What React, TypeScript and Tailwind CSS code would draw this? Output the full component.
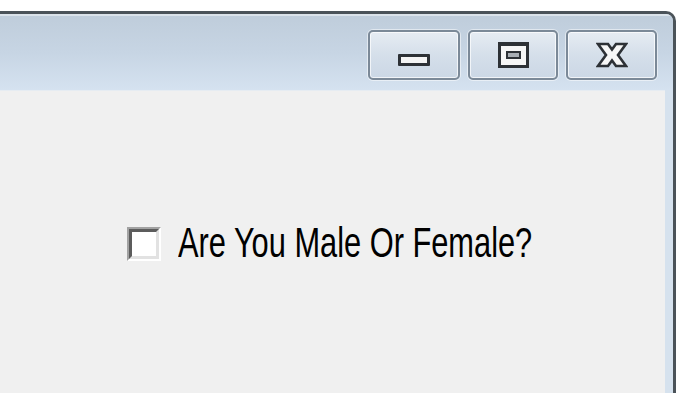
import React from "react";

function TitleButton({ w, children }: { w: string; children: React.ReactNode }) {
  return (
    <div
      className={`${w} h-[50px] rounded-[5px] border-2 border-[#7b8998] bg-gradient-to-b from-[#e6ecf3] via-[#d5dfea] to-[#cbd7e5] shadow-[inset_0_0_0_1px_rgba(255,255,255,0.7),0_0_0_1px_rgba(255,255,255,0.5)] flex items-center justify-center`}
    >
      {children}
    </div>
  );
}

export default function App() {
  return (
    <div className="w-[700px] h-[393px] bg-white overflow-hidden">
      <div className="mt-[11px] w-[676px] h-[400px] border-t-[3px] border-r-[3px] border-[#4b5359] rounded-tr-[10px] overflow-hidden flex flex-col bg-[#d6e2ee]">
        {/* title bar */}
        <div className="h-[76px] shrink-0 border-t-2 border-[#dbe3ea] bg-gradient-to-b from-[#bfcddb] via-[#c7d5e4] to-[#d5e2f0] flex justify-end items-start pt-[14px] pr-[16px] gap-[8px]">
          <TitleButton w="w-[92px]">
            <div className="mt-[10px] w-[32px] h-[12px] border-[3px] border-[#2d3136] bg-[#f4f4f4] rounded-[1px]" />
          </TitleButton>
          <TitleButton w="w-[90px]">
            <div className="-mt-[1px] w-[31px] h-[26px] border-[3px] border-t-[4px] border-[#2d3136] bg-[#f6f6f6] flex items-center justify-center">
              <div className="w-[15px] h-[8px] border-[2px] border-[#2d3136] bg-[#a9aeb4]" />
            </div>
          </TitleButton>
          <TitleButton w="w-[91px]">
            <svg width="32" height="26" viewBox="0 0 32 26" className="-mt-[1px]">
              <polygon
                points="2,2 12,2 16,7.5 20,2 30,2 22,13 30,24 20,24 16,18.5 12,24 2,24 10,13"
                fill="#f7f7f7"
                stroke="#2d3136"
                strokeWidth="2.6"
                strokeLinejoin="miter"
              />
            </svg>
          </TitleButton>
        </div>
        {/* body */}
        <div className="flex-1 mr-[8px] bg-[#f0f0f0] border-t border-[#e6ecf2]">
          <div className="pl-[127px] pt-[133px] flex items-center">
            <div className="w-[34px] h-[34px] border-2 border-t-[#a2a2a2] border-l-[#a2a2a2] border-b-[#ffffff] border-r-[#ffffff]">
              <div className="w-full h-full border-[3px] border-t-[#5c5c5c] border-l-[#5c5c5c] border-b-[#e2e2e2] border-r-[#e2e2e2] bg-white" />
            </div>
            <span className="ml-[17px] text-[42px] leading-none text-black origin-left scale-x-[0.733] whitespace-nowrap [font-family:'Liberation_Sans',Arial,sans-serif] -mt-[2px]">
              Are You Male Or Female?
            </span>
          </div>
        </div>
      </div>
    </div>
  );
}
